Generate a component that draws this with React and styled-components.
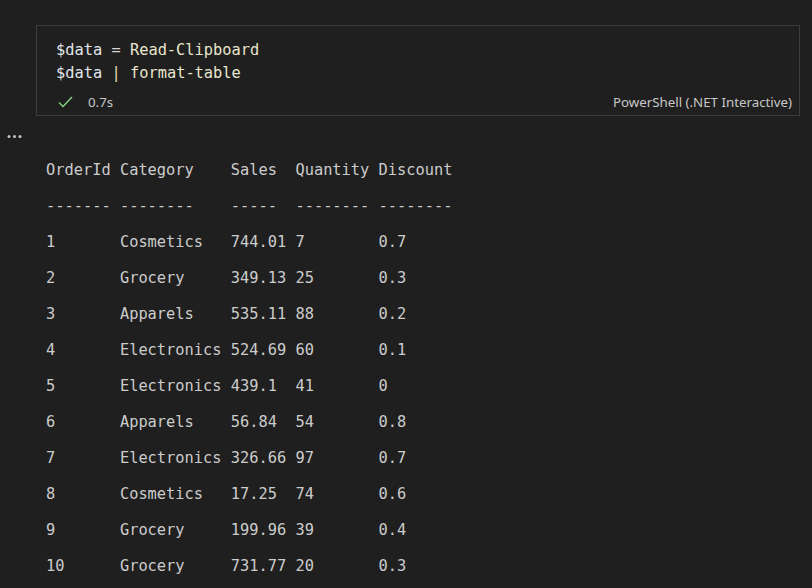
import styled, { createGlobalStyle } from "styled-components";

const rows = [
  ["1", "Cosmetics", "744.01", "7", "0.7"],
  ["2", "Grocery", "349.13", "25", "0.3"],
  ["3", "Apparels", "535.11", "88", "0.2"],
  ["4", "Electronics", "524.69", "60", "0.1"],
  ["5", "Electronics", "439.1", "41", "0"],
  ["6", "Apparels", "56.84", "54", "0.8"],
  ["7", "Electronics", "326.66", "97", "0.7"],
  ["8", "Cosmetics", "17.25", "74", "0.6"],
  ["9", "Grocery", "199.96", "39", "0.4"],
  ["10", "Grocery", "731.77", "20", "0.3"],
];

const widths = [8, 12, 7, 9, 8];

const formatRow = (cells) =>
  cells.map((c, i) => (i < cells.length - 1 ? c.padEnd(widths[i]) : c)).join("");

const lines = [
  formatRow(["OrderId", "Category", "Sales", "Quantity", "Discount"]),
  formatRow(["-------", "--------", "-----", "--------", "--------"]),
  ...rows.map(formatRow),
];

const App = () => {
  return (
    <>
      <GlobalStyle />
      <Page>
        <Cell>
          <Code>
            <Var>$data</Var> = <Cmd>Read-Clipboard</Cmd>
            {"\n"}
            <Var>$data</Var> <Pipe>|</Pipe> <Cmd>format-table</Cmd>
          </Code>
          <Footer>
            <svg width="15" height="12" viewBox="0 0 15 12">
              <path d="M1 6.5 L5 10.5 L14 1" fill="none" stroke="#89d185" strokeWidth="1.4" />
            </svg>
            <Duration>0.7s</Duration>
            <Lang>PowerShell (.NET Interactive)</Lang>
          </Footer>
        </Cell>
        <ToolRow>
          <svg width="15" height="5" viewBox="0 0 15 5">
            <circle cx="2" cy="2.5" r="1.5" fill="#c5c5c5" />
            <circle cx="7.5" cy="2.5" r="1.5" fill="#c5c5c5" />
            <circle cx="13" cy="2.5" r="1.5" fill="#c5c5c5" />
          </svg>
        </ToolRow>
        <Output>
          {lines.map((l, i) => (
            <Line key={i}>{l}</Line>
          ))}
        </Output>
      </Page>
    </>
  );
};

export default App;

const GlobalStyle = createGlobalStyle`
  html, body {
    margin: 0;
    background: #1f1f1f;
    overflow: hidden;
  }
`;

const Page = styled.div`
  width: 812px;
  height: 588px;
  padding-top: 25px;
  box-sizing: border-box;
  background: #1f1f1f;
`;

const Cell = styled.div`
  margin-left: 36px;
  width: 764px;
  height: 91px;
  box-sizing: border-box;
  border: 1px solid #3c3c3c;
  padding: 13px 7px 0 19px;
`;

const Code = styled.pre`
  margin: 0;
  font-family: "DejaVu Sans Mono", "Liberation Mono", monospace;
  font-size: 15.35px;
  line-height: 23px;
  color: #d4d4d4;
`;

const Var = styled.span`
  color: #e2e6ea;
`;

const Cmd = styled.span`
  color: #e8e5cc;
`;

const Pipe = styled.span`
  color: #e0d8b0;
`;

const Footer = styled.div`
  display: flex;
  align-items: center;
  height: 20px;
  margin-top: 7px;
  padding-left: 2px;
  font-family: "Noto Sans", "Open Sans", sans-serif;
  font-size: 13.3px;
  color: #c8c8c8;
`;

const Duration = styled.span`
  margin-left: 15px;
`;

const Lang = styled.span`
  margin-left: auto;
`;

const ToolRow = styled.div`
  display: flex;
  height: 36px;
  padding: 18px 0 0 7px;
  box-sizing: border-box;
`;

const Output = styled.div`
  margin-left: 46px;
  font-family: "DejaVu Sans Mono", "Liberation Mono", monospace;
  font-size: 15.35px;
  color: #cccccc;
`;

const Line = styled.div`
  height: 36px;
  line-height: 36px;
  white-space: pre;
`;
